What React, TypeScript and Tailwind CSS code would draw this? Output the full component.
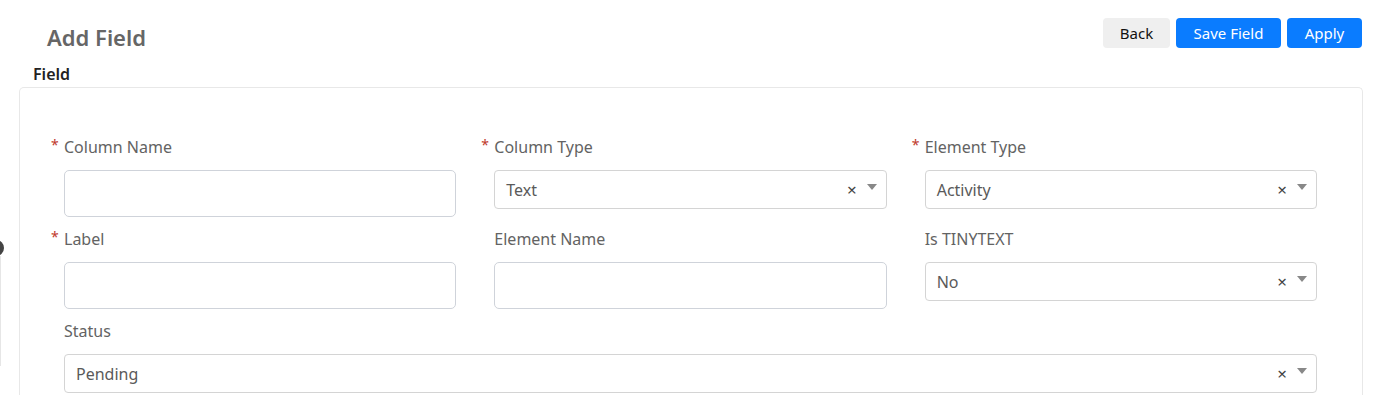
import { ReactNode } from 'react';

const font = { fontFamily: '"Segoe UI", "Noto Sans", "Open Sans", sans-serif' };

function Label({ text, required }: { text: string; required?: boolean }) {
  return (
    <label className="relative block h-6 leading-6 text-[16px] text-[#636363] mb-[11px]">
      {required && (
        <span className="absolute -left-[13px] top-[-2px] text-[14px] text-[#c0392b]">*</span>
      )}
      {text}
    </label>
  );
}

function TextBox() {
  return (
    <input
      type="text"
      className="block w-full h-[47px] rounded-[5px] border border-[#cfd3da] bg-white px-3 outline-none"
    />
  );
}

function Select({ value }: { value: string }) {
  return (
    <div className="flex items-center w-full h-[39px] rounded-[4px] border border-[#d4d4d4] bg-white pl-[11px] pr-[9px]">
      <span className="flex-1 text-[16px] text-[#5a5a5a]">{value}</span>
      <span className="text-[17px] leading-none text-[#444] mr-[10px] -mt-[1px]">×</span>
      <svg width="10" height="6" viewBox="0 0 10 6" className="-mt-[6px]">
        <path d="M0 0 L10 0 L5 6 Z" fill="#888" />
      </svg>
    </div>
  );
}

function Field({ label, required, children }: { label: string; required?: boolean; children: ReactNode }) {
  return (
    <div className="mb-[10px]">
      <Label text={label} required={required} />
      {children}
    </div>
  );
}

export default function App() {
  return (
    <div className="relative min-h-[395px] bg-white overflow-hidden" style={font}>
      {/* drag handle peeking from the left edge */}
      <div className="absolute -left-[12px] top-[240px] w-4 h-4 rounded-full bg-[#444]" />
      <div className="absolute left-0 top-[256px] w-px h-[110px] bg-[#e6e6e6]" />

      <div className="flex items-start justify-between pt-[18px] pr-[13px]">
        <h1 className="pl-[47px] pt-[3px] text-[22px] font-semibold text-[#666] leading-8">Add Field</h1>
        <div className="flex gap-[6px]">
          <button className="h-[30px] w-[67px] rounded-[4px] bg-[#efefef] text-[15px] text-[#111]">Back</button>
          <button className="h-[30px] w-[105px] rounded-[4px] bg-[#0a7cff] text-[15px] text-white">Save Field</button>
          <button className="h-[30px] w-[75px] rounded-[4px] bg-[#0a7cff] text-[15px] text-white">Apply</button>
        </div>
      </div>

      <div className="pl-[33px] mt-[9px] h-[24px] leading-6 text-[16px] font-semibold text-[#222]">Field</div>

      <div className="ml-[19px] mr-[12px] mt-[1px] rounded-t-[5px] border border-b-0 border-[#e8e8e8] pt-[47px] pl-[44px] pr-[45px] min-h-[320px]">
        <div className="grid grid-cols-3 gap-x-[38px]">
          <Field label="Column Name" required><TextBox /></Field>
          <Field label="Column Type" required><Select value="Text" /></Field>
          <Field label="Element Type" required><Select value="Activity" /></Field>
          <Field label="Label" required><TextBox /></Field>
          <Field label="Element Name"><TextBox /></Field>
          <Field label="Is TINYTEXT"><Select value="No" /></Field>
        </div>
        <Field label="Status"><Select value="Pending" /></Field>
      </div>
    </div>
  );
}
